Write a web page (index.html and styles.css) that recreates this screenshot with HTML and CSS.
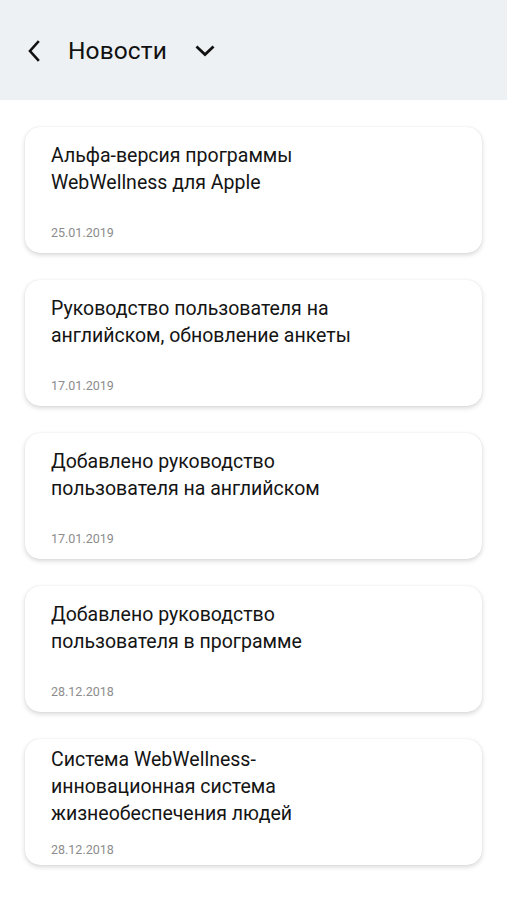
FILE: index.html
```html
<!DOCTYPE html>
<html lang="ru">
  <head>
    <meta charset="UTF-8" />
    <title>Новости</title>
    <link rel="stylesheet" href="styles.css">
  </head>
  <body>
    <header class="topbar">
      <button class="icon-btn back-btn" aria-label="Назад">
        <svg width="14" height="22" viewBox="0 0 14 22">
          <path d="M11 2 L3 11 L11 20" fill="none" stroke="#111" stroke-width="2.6" stroke-linecap="square" />
        </svg>
      </button>
      <h1 class="topbar-title">Новости</h1>
      <button class="icon-btn drop-btn" aria-label="Выбрать">
        <svg width="20" height="14" viewBox="0 0 20 14">
          <path d="M2.5 3.5 L10 10.5 L17.5 3.5" fill="none" stroke="#111" stroke-width="2.8" stroke-linecap="square" />
        </svg>
      </button>
    </header>

    <main class="news-list">
      <article class="card">
        <h2 class="card-title">Альфа-версия программы<br>WebWellness для Apple</h2>
        <span class="card-date">25.01.2019</span>
      </article>
      <article class="card">
        <h2 class="card-title">Руководство пользователя на<br>английском, обновление анкеты</h2>
        <span class="card-date">17.01.2019</span>
      </article>
      <article class="card">
        <h2 class="card-title">Добавлено руководство<br>пользователя на английском</h2>
        <span class="card-date">17.01.2019</span>
      </article>
      <article class="card">
        <h2 class="card-title">Добавлено руководство<br>пользователя в программе</h2>
        <span class="card-date">28.12.2018</span>
      </article>
      <article class="card card--long">
        <h2 class="card-title">Система WebWellness-<br>инновационная система<br>жизнеобеспечения людей</h2>
        <span class="card-date">28.12.2018</span>
      </article>
    </main>
  </body>
</html>
```

FILE: styles.css
```css
body {
  margin: 0;
  font-family: Roboto, "Noto Sans", Arial, sans-serif;
  background: #ffffff;
  color: #141414;
}

.topbar {
  height: 100px;
  background: #eef1f3;
  display: flex;
  align-items: center;
  padding: 0 0 0 24px;
  box-sizing: border-box;
}

.icon-btn {
  background: none;
  border: none;
  padding: 0;
  display: flex;
  align-items: center;
  justify-content: center;
  cursor: pointer;
}

.back-btn {
  width: 20px;
  height: 24px;
  margin-top: 1px;
}

.topbar-title {
  margin: 0 0 0 24px;
  font-size: 24.5px;
  font-weight: 400;
  color: #111;
  letter-spacing: 0.1px;
}

.drop-btn {
  width: 22px;
  height: 16px;
  margin-left: 27px;
  margin-top: 1px;
}

.news-list {
  display: flex;
  flex-direction: column;
  gap: 27px;
  padding: 27px 25px 20px;
}

.card {
  height: 126px;
  box-sizing: border-box;
  padding: 15px 24px 12px 26px;
  background: #fff;
  border-radius: 15px;
  box-shadow: 0 2px 5px rgba(0, 0, 0, 0.16), 0 0 1px rgba(0, 0, 0, 0.12);
  display: flex;
  flex-direction: column;
}

.card--long {
  padding-top: 7px;
  padding-bottom: 7px;
}

.card-title {
  margin: 0;
  font-size: 19.5px;
  font-weight: 400;
  line-height: 27px;
  color: #141414;
}

.card-date {
  margin-top: auto;
  font-size: 12.5px;
  line-height: 16px;
  color: #8c8c8c;
}
```
